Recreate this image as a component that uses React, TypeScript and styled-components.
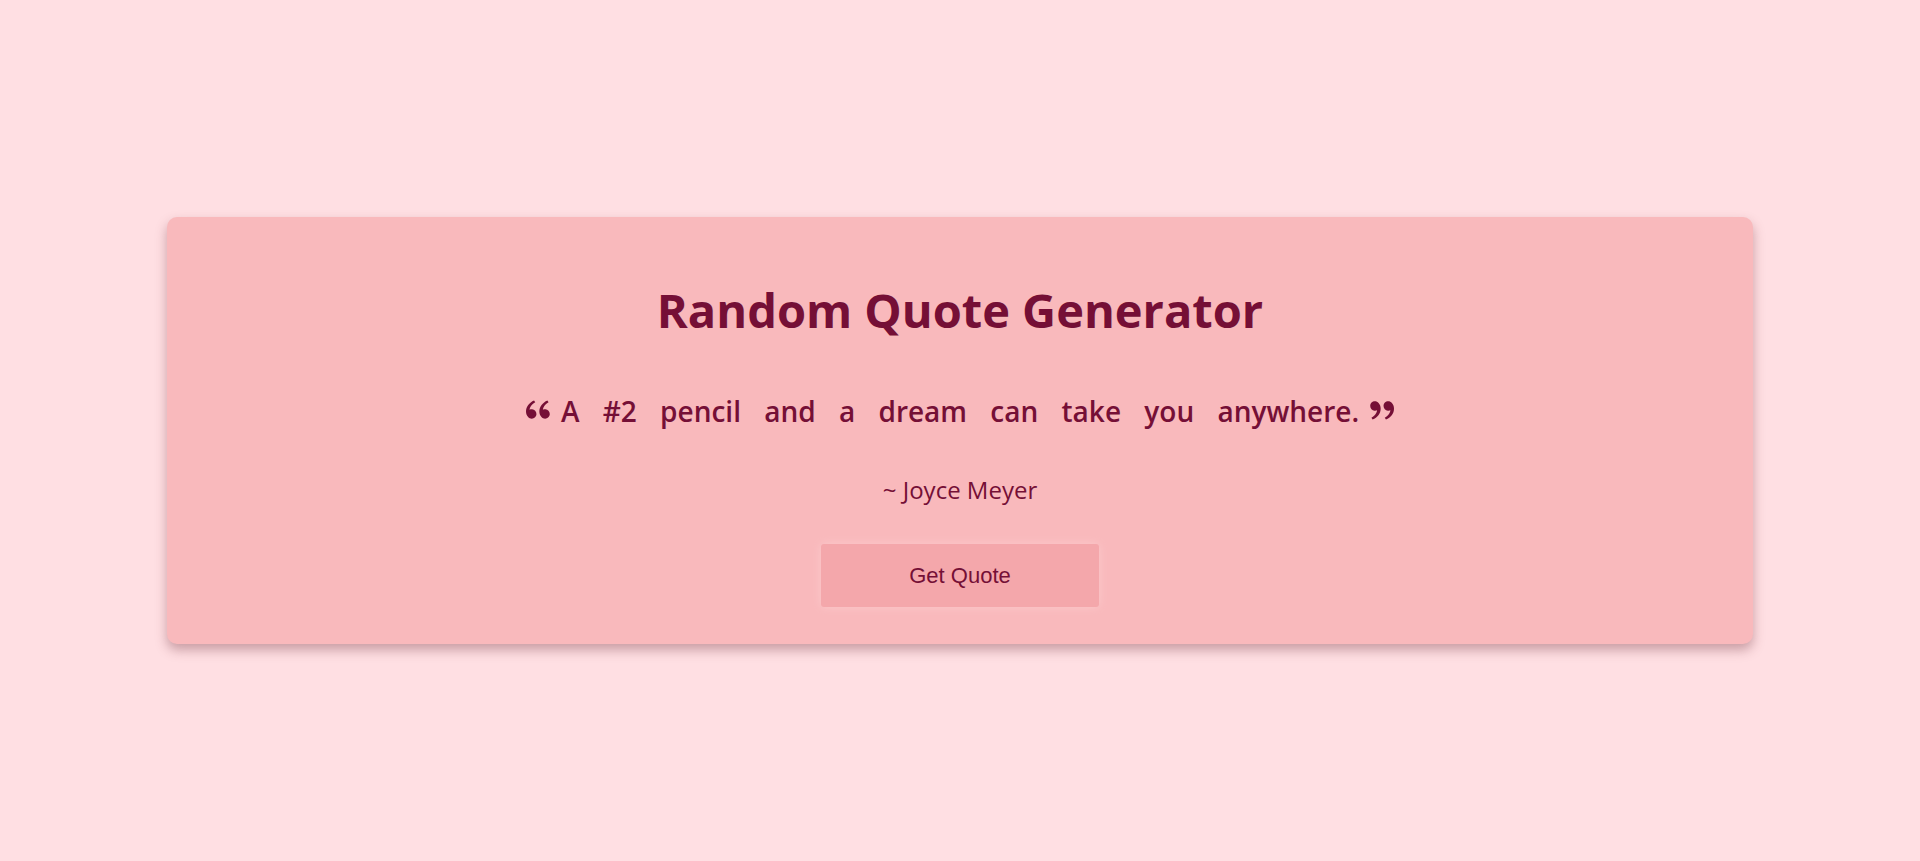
import React, { useState } from "react";
import styled, { createGlobalStyle } from "styled-components";
import { RiDoubleQuotesL, RiDoubleQuotesR } from "react-icons/ri";

const quotes = [
    { text: "A #2 pencil and a dream can take you anywhere.", author: "Joyce Meyer" },
    { text: "Whatever you are, be a good one.", author: "Abraham Lincoln" },
    { text: "Dream big and dare to fail.", author: "Norman Vaughan" },
];

const GlobalStyle = createGlobalStyle`
* {
    box-sizing: border-box;
}

body {
    margin: 0;
    background-color: #ffdfe3;
    font-family: "Open Sans", "Noto Sans", sans-serif;
}
`;

export default function App() {
    const [index, setIndex] = useState<number>(0);
    const quote = quotes[index];

    // 다음 명언으로 넘기기
    const onClickQuote = () => {
        setIndex((index + 1) % quotes.length);
    };

    return (
        <Page>
            <GlobalStyle />
            <Card>
                <Title>Random Quote Generator</Title>
                <QuoteText>
                    <RiDoubleQuotesL className="mark" /> <Words>{quote.text}</Words> <RiDoubleQuotesR className="mark" />
                </QuoteText>
                <Author>~ {quote.author}</Author>
                <QuoteBtn onClick={onClickQuote}>Get Quote</QuoteBtn>
            </Card>
        </Page>
    );
}

const Page = styled.div`
display: flex;
justify-content: center;
align-items: center;

min-height: 100vh;
`;

const Card = styled.div`
display: flex;
flex-direction: column;
align-items: center;

width: 80%;
padding: 61px 25px 37px;
box-sizing: content-box;

background-color: #f9b9bc;
color: #750f36;

border-radius: 10px;
box-shadow: 0 6px 12px rgba(120, 60, 70, 0.4);
`;

const Title = styled.h1`
margin: 0;

font-size: 47px;
font-weight: 700;
`;

const QuoteText = styled.p`
margin: 50px 0 0;

font-size: 28px;
font-weight: 600;
text-align: center;

.mark {
    font-size: 32px;
    vertical-align: -4px;
}
`;

const Words = styled.span`
word-spacing: 16px;
`;

const Author = styled.p`
margin: 43px 0 0;

font-size: 24px;
`;

const QuoteBtn = styled.button`
width: 278px;
height: 63px;
margin-top: 38px;

background-color: #f4a7ab;
color: #750f36;

border: none;
border-radius: 3px;
box-shadow: 0 0 10px #fbc9cb;
font-family: "Liberation Sans", Arial, sans-serif;
font-size: 22px;
cursor: pointer;
`;
